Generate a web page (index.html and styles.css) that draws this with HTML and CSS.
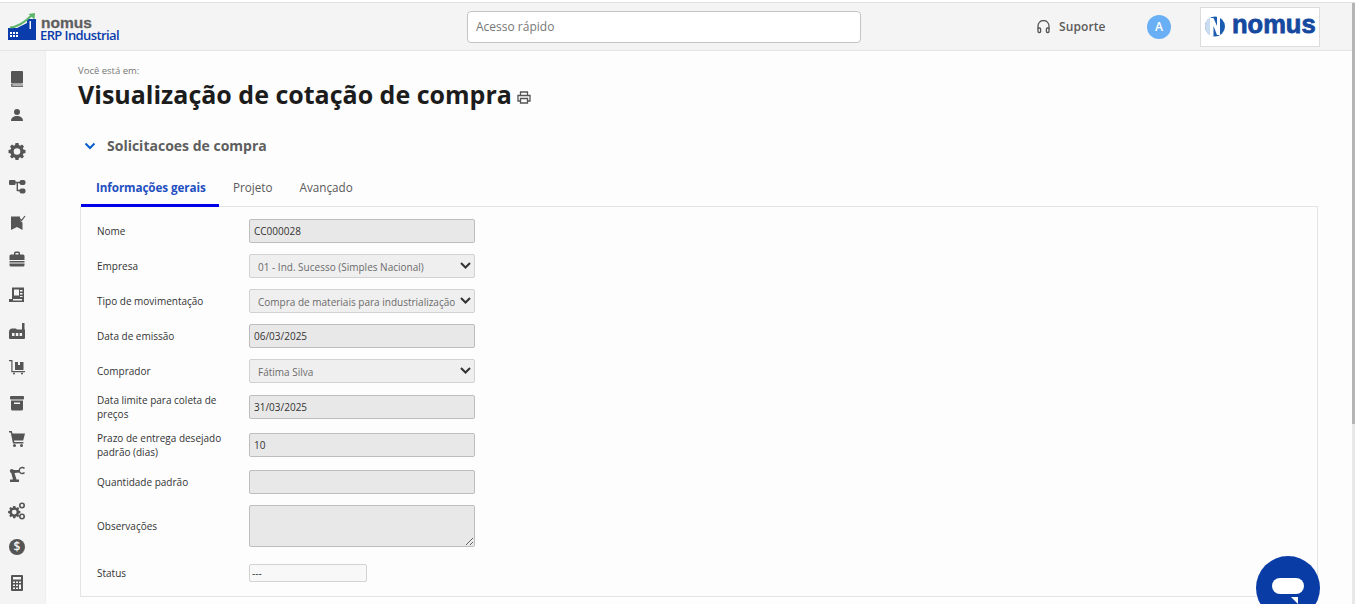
FILE: index.html
```html
<!DOCTYPE html>
<html lang="pt-BR">
<head>
<meta charset="utf-8">
<title>Visualização de cotação de compra</title>
<link rel="stylesheet" href="styles.css">
</head>
<body>
<header class="topbar">
  <div class="brand">
    <svg class="brand-mark" width="28" height="27" viewBox="0 0 28 27"><path fill="#0a3cab" d="M0 15h9l10-5V6h9v21H0z"/><path fill="#fff" d="M2 19h2v2H2zm3 0h2v2H5zm3 0h2v2H8zM2 22h2v2H2zm3 0h2v2H5zm3 0h2v2H8z"/><path fill="#f4f4f4" d="M21.500 8h1.500v8h-1.500z"/><path fill="none" stroke="#5cb56a" stroke-width="2" d="M2 14.500C10 14 17 9 23.500 2.500"/><path fill="#5cb56a" d="M20.500 1L27 0l-.5 6.500z"/></svg>
    <div class="brand-text"><span class="brand-nomus">nomus</span><span class="brand-erp">ERP Industrial</span></div>
  </div>
  <div class="search"><input class="search-input" type="text" placeholder="Acesso rápido"></div>
  <div class="top-actions">
    <div class="support">
      <svg width="13" height="14" viewBox="0 0 13 14" fill="none" stroke="#555" stroke-width="1.300"><path d="M1 9V6a5.500 5.500 0 0 1 11 0v3"/><rect x="1" y="8" width="2.600" height="4.500" rx="1"/><rect x="9.400" y="8" width="2.600" height="4.500" rx="1"/></svg>
      <span>Suporte</span>
    </div>
    <div class="avatar">A</div>
    <div class="company-logo">
      <svg width="20" height="21" viewBox="0 0 20 21"><circle cx="10" cy="10.500" r="10" fill="#1a5cb0"/><path fill="#c9dcf0" d="M0 10.500a10 10 0 0 1 5-8.700v17.400a10 10 0 0 1-5-8.700z"/><path fill="#fff" d="M5 2h3.500l3.500 8V1h3v18h-3L8.500 10v10H5z"/></svg>
      <span>nomus</span>
    </div>
  </div>
</header>
<div class="shell">
  <nav class="sidebar">
    <svg class="nav-icon" viewBox="0 0 16 16"><rect x="2" y="0" width="12" height="12.500" rx="1"/><path d="M2 13h12v3H3a1 1 0 0 1-1-1z" opacity=".85"/><path fill="#f4f4f4" d="M3.500 13.500H14v1H3.500z"/></svg>
    <svg class="nav-icon" viewBox="0 0 16 16"><circle cx="8" cy="5" r="3"/><path d="M2 14c0-3.200 2.700-5 6-5s6 1.800 6 5z"/></svg>
    <svg class="nav-icon" viewBox="0 0 16 16"><path fill-rule="evenodd" d="M6.500 0h3l.4 2.100 1.300.6L13 1.500l2 2-1.200 1.800.6 1.300 2.100.4v3l-2.100.4-.6 1.300 1.200 1.800-2 2-1.800-1.200-1.300.6-.4 2.100h-3l-.4-2.100-1.300-.6L3 15.500l-2-2 1.200-1.800-.6-1.300L-.5 10V7l2.100-.4.6-1.300L1 3.500l2-2 1.800 1.200 1.300-.6zM8 5.200a3.300 3.300 0 1 0 0 6.600 3.300 3.300 0 0 0 0-6.600z"/></svg>
    <svg class="nav-icon" viewBox="0 0 16 16"><rect x="0" y="1" width="6.500" height="5" rx="1"/><rect x="10.500" y="1" width="6" height="5" rx="2"/><rect x="10.500" y="9.500" width="6" height="5" rx="2"/><path d="M6 2.800h5v1.400H6zM7.600 4h1.400v8H7.600zM8 10.800h3v1.400H8z"/></svg>
    <svg class="nav-icon" viewBox="0 0 16 16"><path d="M2 1.500h9v3.500l2 2.500 .5-.5V15l-5.500-3L2 15z"/><path fill="none" stroke="#555" stroke-width="1.200" d="M10.500 3.500l2 2L16 1"/></svg>
    <svg class="nav-icon" viewBox="0 0 16 16"><path fill-rule="evenodd" d="M5 3.500V2a1.500 1.500 0 0 1 1.500-1.500h3A1.500 1.500 0 0 1 11 2v1.500h3a1.500 1.500 0 0 1 1.500 1.500v4H.5V5A1.500 1.500 0 0 1 2 3.500zM6.500 2v1.500h3V2z"/><path d="M.5 10h15v1.500H.5zM.5 12.500h15V14a1.500 1.500 0 0 1-1.500 1.500H2A1.500 1.500 0 0 1 .5 14z"/></svg>
    <svg class="nav-icon" viewBox="0 0 16 16"><path fill-rule="evenodd" d="M3 .5h12v14.500H0v-3h3zM5 2.500v6h5v-6zM11 3v1.500h2.500V3zM11 6v1.500h2.500V6zM11 9v1h2.500V9zM4 12h9v1.500H4z"/></svg>
    <svg class="nav-icon" viewBox="0 0 16 16"><path fill-rule="evenodd" d="M13 0h2.500v6.500H16V15a1 1 0 0 1-1 1H1a1 1 0 0 1-1-1V8.500C0 7 1.500 5.500 3 5.500h3c1 0 1.500.5 2 1h5zM3 10v3h2.500v-3zM6.800 10v3h2.500v-3zM10.600 10v3h2.500v-3z"/></svg>
    <svg class="nav-icon" viewBox="0 0 16 16"><path d="M6 3h3v3h2V3h3.500v8H6z"/><path d="M0 1h3.500v11H16v1.300H2.300V2.300H0z"/><circle cx="5" cy="14.500" r="1"/><circle cx="13" cy="14.500" r="1"/></svg>
    <svg class="nav-icon" viewBox="0 0 16 16"><rect x="1" y="1" width="14" height="3.500" rx="1"/><path fill-rule="evenodd" d="M2 5.500h12V14a1.500 1.500 0 0 1-1.500 1.500h-9A1.500 1.500 0 0 1 2 14zM5 7.500V9h6V7.500z"/></svg>
    <svg class="nav-icon" viewBox="0 0 16 16"><path d="M0 0h2.800l.7 2.500H16l-1.800 7H5l.4 1.500h9v1.500H4L1.700 1.500H0z"/><circle cx="5.500" cy="14.500" r="1.500"/><circle cx="12.500" cy="14.500" r="1.500"/></svg>
    <svg class="nav-icon" viewBox="0 0 16 16"><path d="M1 12.500h9V15H1zM4 12.500l-2-7.500 1.500-2 7.500 0v2.500l-5.500.5 2 6.500z"/><circle cx="2.800" cy="4" r="2"/><path fill="none" stroke="#555" stroke-width="1.400" d="M15.500 1.500a3 3 0 1 0 0 4"/></svg>
    <svg class="nav-icon" viewBox="0 0 16 16"><g transform="translate(-.5 3) scale(.72)"><path fill-rule="evenodd" d="M6.500 0h3l.4 2.100 1.300.6L13 1.500l2 2-1.200 1.800.6 1.300 2.100.4v3l-2.100.4-.6 1.300 1.200 1.800-2 2-1.800-1.200-1.300.6-.4 2.100h-3l-.4-2.100-1.300-.6L3 15.500l-2-2 1.200-1.800-.6-1.300L-.5 10V7l2.100-.4.6-1.300L1 3.500l2-2 1.800 1.200 1.300-.6zM8 5.200a3.300 3.300 0 1 0 0 6.600 3.300 3.300 0 0 0 0-6.600z"/></g><circle cx="13" cy="2.500" r="2.200" fill="none" stroke="#555" stroke-width="1.600"/><circle cx="13" cy="13.500" r="2.200" fill="none" stroke="#555" stroke-width="1.600"/></svg>
    <svg class="nav-icon" viewBox="0 0 16 16"><circle cx="8" cy="8" r="8"/><text x="8" y="12.300" class="dollar">$</text></svg>
    <svg class="nav-icon" viewBox="0 0 16 16"><path fill-rule="evenodd" d="M3 0h10a1 1 0 0 1 1 1v14a1 1 0 0 1-1 1H3a1 1 0 0 1-1-1V1a1 1 0 0 1 1-1zM4 2v2.500h8V2zM4 6.500V8h2V6.500zM7 6.500V8h2V6.500zM10 6.500V8h2V6.500zM4 9.500V11h2V9.500zM7 9.500V11h2V9.500zM10 9.500V14h2V9.500zM4 12.500V14h2v-1.500zM7 12.500V14h2v-1.500z"/></svg>
  </nav>
  <main class="content">
    <p class="crumb">Você está em:</p>
    <div class="title-row">
      <h1 class="page-title">Visualização de cotação de compra</h1>
      <svg class="print-icon" width="14" height="13" viewBox="0 0 14 13" fill="none" stroke="#555" stroke-width="1.300"><path d="M3.500 4V1h7v3M3.500 10H1V4.500h12V10h-2.500"/><path d="M3.500 7.500h7V12h-7z"/></svg>
    </div>
    <div class="section-head">
      <svg width="12" height="8" viewBox="0 0 12 8" fill="none" stroke="#0a5fd0" stroke-width="2"><path d="M1.500 1.500L6 6l4.500-4.500"/></svg>
      <h2 class="section-title">Solicitacoes de compra</h2>
    </div>
    <div class="tabs">
      <span class="tab tab-active">Informações gerais</span>
      <span class="tab">Projeto</span>
      <span class="tab">Avançado</span>
    </div>
    <section class="panel">
      <form class="form">
        <label class="lbl">Nome</label>
        <input class="field" type="text" value="CC000028" disabled>
        <label class="lbl">Empresa</label>
        <div class="select"><span class="select-text">01 - Ind. Sucesso (Simples Nacional)</span><svg class="caret" width="11" height="7" viewBox="0 0 11 7" fill="none" stroke="#333" stroke-width="2"><path d="M1 1l4.500 4.500L10 1"/></svg></div>
        <label class="lbl">Tipo de movimentação</label>
        <div class="select"><span class="select-text">Compra de materiais para industrialização</span><svg class="caret" width="11" height="7" viewBox="0 0 11 7" fill="none" stroke="#333" stroke-width="2"><path d="M1 1l4.500 4.500L10 1"/></svg></div>
        <label class="lbl">Data de emissão</label>
        <input class="field" type="text" value="06/03/2025" disabled>
        <label class="lbl">Comprador</label>
        <div class="select"><span class="select-text">Fátima Silva</span><svg class="caret" width="11" height="7" viewBox="0 0 11 7" fill="none" stroke="#333" stroke-width="2"><path d="M1 1l4.500 4.500L10 1"/></svg></div>
        <label class="lbl">Data limite para coleta de preços</label>
        <input class="field" type="text" value="31/03/2025" disabled>
        <label class="lbl">Prazo de entrega desejado padrão (dias)</label>
        <input class="field" type="text" value="10" disabled>
        <label class="lbl">Quantidade padrão</label>
        <input class="field" type="text" disabled>
        <label class="lbl">Observações</label>
        <textarea class="field area" disabled></textarea>
        <label class="lbl">Status</label>
        <input class="status" type="text" value="---" disabled>
      </form>
    </section>
  </main>
</div>
<div class="chat-bubble"><span class="chat-pill"></span><span class="chat-tail"></span></div>
<div class="scrollbar"><div class="scroll-thumb"></div></div>
</body>
</html>
```
FILE: styles.css
```css
* { box-sizing: border-box; }
html, body { height: 100%; }
body {
  margin: 0;
  height: 604px;
  overflow: hidden;
  background: #fdfdfd;
  font-family: "Open Sans", sans-serif;
  color: #333;
  border-top: 2px solid #fff;
}
.topbar {
  height: 49px;
  background: #f4f4f4;
  border-top: 1px solid #e0e0e0;
  border-bottom: 1px solid #e4e4e4;
  display: grid;
  grid-template-columns: 467px 394px 1fr;
  align-items: center;
}
.brand { display: flex; align-items: flex-start; gap: 4px; padding-left: 8px; height: 100%; padding-top: 10px; }
.brand-mark { flex: none; }
.brand-text { display: flex; flex-direction: column; margin-top: 4px; padding-left: 1px; }
.brand-nomus { font-family: "Liberation Sans", sans-serif; font-weight: 700; font-size: 15.500px; color: #5f5f5f; line-height: 11px; -webkit-text-stroke: 0.3px #5f5f5f; }
.brand-erp { font-family: "Open Sans", sans-serif; font-weight: 600; font-size: 13px; letter-spacing: -0.6px; color: #0a3cab; line-height: 15px; margin-left: -1px; }
.search-input {
  display: block;
  width: 394px;
  height: 32px;
  border: 1px solid #c4c4c4;
  border-radius: 4px;
  background: #fff;
  padding: 0 8px;
  font: 12px "Open Sans", sans-serif;
  color: #777;
}
.search-input::placeholder { color: #777; opacity: 1; }
.top-actions { display: flex; align-items: center; padding-left: 176px; }
.support { display: flex; align-items: center; gap: 9px; font-size: 12px; font-weight: 600; letter-spacing: 0.1px; color: #5a5a5a; width: 110px; }
.avatar {
  width: 24px; height: 24px; border-radius: 50%;
  background: #69aff5; color: #fff;
  font-size: 12px; font-weight: 600;
  display: flex; align-items: center; justify-content: center;
}
.company-logo {
  margin-left: 29px;
  width: 120px; height: 40px;
  background: #fff;
  border: 1px solid #dcdcdc;
  display: flex; align-items: center; gap: 7px;
  padding-left: 4px;
}
.company-logo span {
  font-family: "Liberation Sans", sans-serif;
  font-weight: 700; font-size: 25.500px;
  color: #15499f; -webkit-text-stroke: 0.8px #15499f;
  line-height: 1;
  margin-top: -3px;
}
.shell { display: flex; height: 553px; }
.sidebar {
  width: 46px; flex: none;
  background: #f4f4f4;
  border-right: 1px solid #efefef;
  display: flex; flex-direction: column; align-items: center;
  padding-top: 20px;
  padding-right: 12px;
  gap: 20px;
}
.nav-icon { width: 16px; height: 16px; flex: none; fill: #555; overflow: visible; }
.dollar { fill: #f4f4f4; font: 600 12px "Open Sans", sans-serif; text-anchor: middle; }
.content { flex: 1; padding: 13px 37px 0 32px; min-width: 0; }
.crumb { margin: 0; font-size: 9.500px; line-height: 13px; color: #777; }
.title-row { display: flex; align-items: flex-end; gap: 5px; margin-top: -1px; height: 36px; }
.page-title { margin: 0; font-size: 25px; line-height: 36px; font-weight: 700; color: #1c1c1c; white-space: nowrap; }
.print-icon { margin-bottom: 8px; }
.section-head { display: flex; align-items: center; gap: 11px; margin-top: 22px; padding-left: 6px; height: 24px; }
.section-title { margin: 0; font-size: 14px; font-weight: 700; color: #5e5e5e; line-height: 20px; }
.tabs { display: flex; margin-top: 14px; padding-left: 3px; height: 35px; }
.tab { padding: 0 13px; font-size: 11.700px; line-height: 30px; color: #5a5a5a; height: 35px; white-space: nowrap; }
.tab-active + .tab { padding-left: 14px; }
.tab + .tab + .tab { padding-left: 14px; }
.tab-active { color: #1f4fc0; font-weight: 700; letter-spacing: -0.1px; border-bottom: 3px solid #0000e6; padding: 0 0 0 15px; width: 138px; }
.panel { border: 1px solid #e4e4e4; margin-left: 2px; height: 391px; padding: 6.500px 16px 0; margin-top: -1px; }
.form {
  display: grid;
  grid-template-columns: 152px 226px;
  grid-template-rows: repeat(5, 35px) 37px 39px 35px 53px 41px;
  align-items: center;
  justify-content: start;
}
.lbl { color: #333; font-size: 10px; line-height: 14px; max-width: 130px; }
.field {
  display: block; width: 226px; height: 24px;
  background: #e8e8e8;
  border: 1px solid #bdbdbd;
  border-radius: 2px;
  padding: 0 4px;
  font: 10px "Open Sans", sans-serif;
  color: #333; opacity: 1;
  -webkit-text-fill-color: #333;
}
.area { height: 42px; resize: vertical; }
.select {
  display: flex; align-items: center; justify-content: space-between;
  width: 226px; height: 24px;
  background: #efefef;
  border: 1px solid #d2d2d2;
  border-radius: 2px;
  padding: 1px 3px 0 8px;
  font-size: 10px;
  color: #6b6b6b;
}
.select-text { white-space: nowrap; overflow: hidden; width: 197px; }
.caret { flex: none; margin-top: -2px; }
.status {
  display: block; width: 118px; height: 18px;
  background: #f8f8f8;
  border: 1px solid #d2d2d2;
  border-radius: 2px;
  padding: 0 2px;
  font: 10px "Open Sans", sans-serif;
  color: #333; opacity: 1;
  -webkit-text-fill-color: #333;
}
.chat-bubble { position: fixed; left: 1256px; top: 556px; width: 64px; height: 64px; border-radius: 50%; background: #0a3ca6; }
.chat-pill { position: absolute; left: 16px; top: 22px; width: 32px; height: 16px; border-radius: 8px; background: #fff; }
.chat-tail { position: absolute; left: 35px; top: 41px; width: 7px; height: 7px; background: #fff; clip-path: polygon(0 0, 100% 0, 100% 100%); }
.scrollbar { position: fixed; right: 0; top: 3px; bottom: 0; width: 3px; background: #e8e8e8; }
.scroll-thumb { height: 421px; background: #b5b5b5; }
```
